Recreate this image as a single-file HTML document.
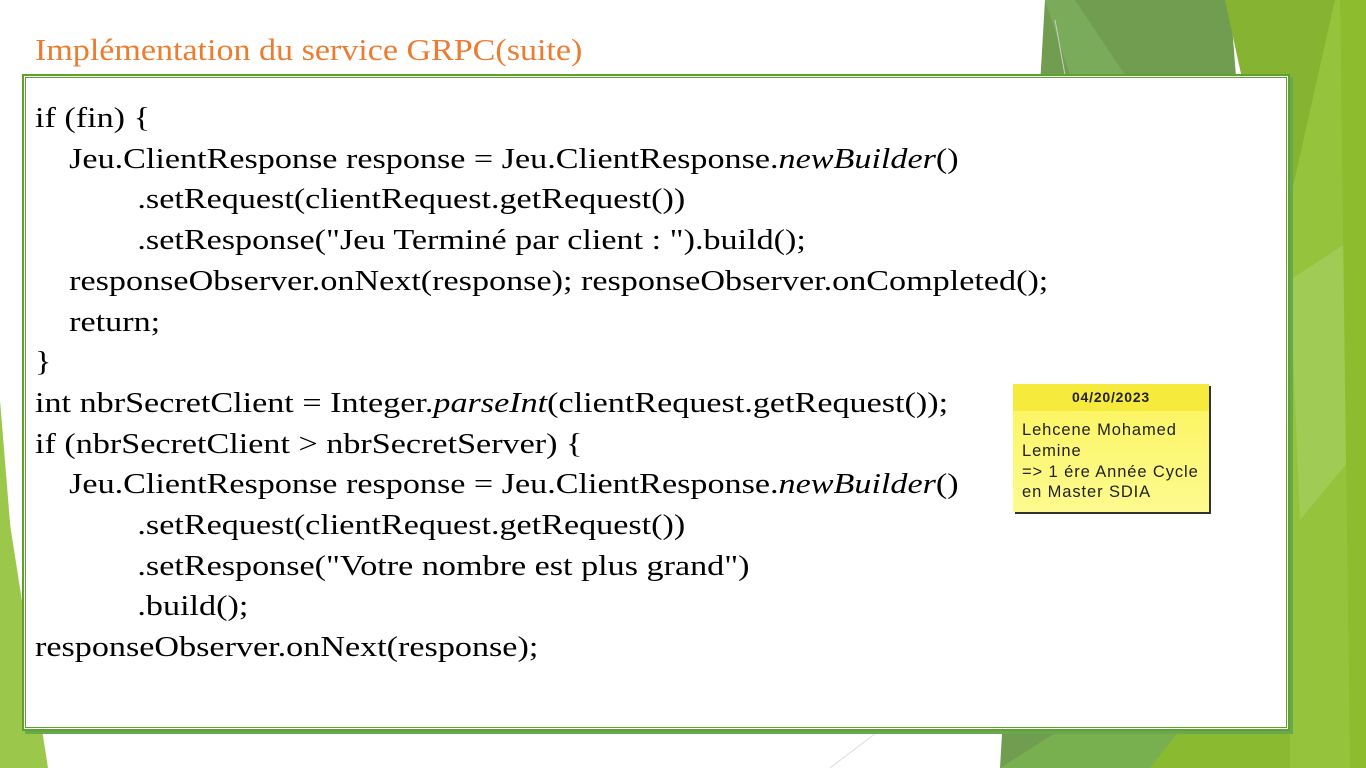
<!DOCTYPE html>
<html><head><meta charset="utf-8"><style>
body{margin:0;width:1366px;height:768px;overflow:hidden;background:#fff;position:relative;font-family:"Liberation Serif",serif}
svg.bg{position:absolute;left:0;top:0}
.title{position:absolute;left:35px;top:32px;font-size:31px;color:#ec7c30;white-space:nowrap;transform:scaleX(1.098);transform-origin:0 0}
.box{position:absolute;left:22px;top:74px;width:1264px;height:653px;background:#fff;border:2px solid #5ea12d;box-shadow:3px 3px 0 #6aa84f, inset 0 0 0 1px #fff, inset 0 0 0 2px #5ea12d}
.code{position:absolute;left:35px;top:98px;font-size:29px;line-height:40.7px;color:#000;white-space:pre;transform:scaleX(1.177);transform-origin:0 0}
.note{position:absolute;left:1013px;top:384px;width:196px;height:128px;background:linear-gradient(#fbf35a,#fdfb90);box-shadow:2px 2px 0 #333;font-family:"Liberation Sans",sans-serif;font-size:16.5px;color:#222;overflow:hidden}
.note .h{height:27px;text-align:center;font-weight:bold;font-size:14px;letter-spacing:0.8px;line-height:27px;background:#f6ea3c}
.note .b{padding:9px 0 0 9px;line-height:20.8px;white-space:nowrap;letter-spacing:0.9px}
</style></head><body>
<svg class="bg" width="1366" height="768">
<polygon points="1045,0 1230,0 1290,768 1000,768" fill="#709d50"/>
<polygon points="1045,0 1075,0 1125,75 1070,75" fill="#7aab5a"/>
<polygon points="1225,0 1366,0 1366,768 1295,768 1290,300" fill="#86b432"/>
<polygon points="1335,0 1366,0 1366,768 1290,768 1290,200" fill="#95c43c"/>
<polygon points="1290,280 1366,230 1366,440 1300,520" fill="#a0cb55"/>
<polygon points="1340,0 1366,0 1366,768 1350,768" fill="#8dbc2e"/>
<polygon points="1000,768 1060,730 1290,730 1250,768" fill="#78b050"/>
<polygon points="1180,730 1290,730 1290,768 1150,768" fill="#8aba30"/>
<polygon points="0,400 30,768 0,768" fill="#9bc84a"/>
<polygon points="0,460 48,768 0,768" fill="#9bc84a"/>
<line x1="1055" y1="20" x2="1065" y2="75" stroke="#ccc"/>
<line x1="830" y1="768" x2="880" y2="730" stroke="#ddd"/>
</svg>
<div class="title">Implémentation du service GRPC(suite)</div>
<div class="box"></div>
<div class="code">if (fin) {
    Jeu.ClientResponse response = Jeu.ClientResponse.<i>newBuilder</i>()
            .setRequest(clientRequest.getRequest())
            .setResponse("Jeu Terminé par client : ").build();
    responseObserver.onNext(response); responseObserver.onCompleted();
    return;
}
int nbrSecretClient = Integer.<i>parseInt</i>(clientRequest.getRequest());
if (nbrSecretClient &gt; nbrSecretServer) {
    Jeu.ClientResponse response = Jeu.ClientResponse.<i>newBuilder</i>()
            .setRequest(clientRequest.getRequest())
            .setResponse("Votre nombre est plus grand")
            .build();
responseObserver.onNext(response);</div>
<div class="note"><div class="h">04/20/2023</div><div class="b">Lehcene Mohamed<br>Lemine<br>=&gt; 1 ére Année Cycle<br>en Master SDIA</div></div>
</body></html>
